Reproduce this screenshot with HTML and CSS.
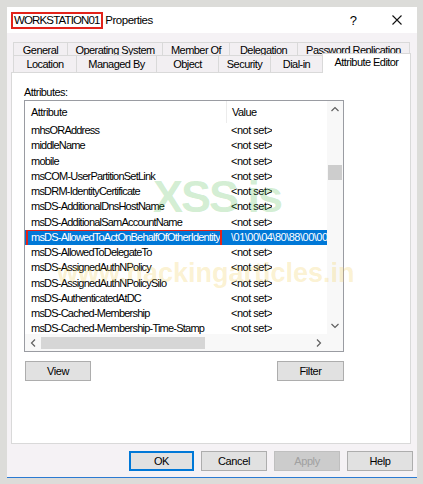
FILE: index.html
```html
<!DOCTYPE html>
<html>
<head>
<meta charset="utf-8">
<link rel="stylesheet" href="styles.css">
</head>
<body>
<div class="window">
  <div class="titlebar">
    <div class="title"><span class="hl-name">WORKSTATION01</span> Properties</div>
    <div class="help">?</div>
    <div class="close">
      <svg width="10" height="10" viewBox="0 0 10 10"><path d="M0.5 0.5 L9.5 9.5 M9.5 0.5 L0.5 9.5" stroke="#111" stroke-width="1.1" fill="none"/></svg>
    </div>
  </div>
  <div class="tabs">
    <div class="tabrow row1">
      <div class="tab w54">General</div>
      <div class="tab w95">Operating System</div>
      <div class="tab w67">Member Of</div>
      <div class="tab w68">Delegation</div>
      <div class="tab w113 last">Password Replication</div>
    </div>
    <div class="tabrow row2">
      <div class="tab w63">Location</div>
      <div class="tab w80">Managed By</div>
      <div class="tab w62">Object</div>
      <div class="tab w52">Security</div>
      <div class="tab w52">Dial-in</div>
      <div class="tab active">Attribute Editor</div>
    </div>
  </div>
  <div class="panel">
    <div class="label">Attributes:</div>
    <div class="list">
      <div class="content">
        <div class="header">
          <div class="hcell c1">Attribute</div>
          <div class="hcell c2">Value</div>
        </div>
        <div class="row"><div class="c1">mhsORAddress</div><div class="c2">&lt;not set&gt;</div></div>
        <div class="row"><div class="c1">middleName</div><div class="c2">&lt;not set&gt;</div></div>
        <div class="row"><div class="c1">mobile</div><div class="c2">&lt;not set&gt;</div></div>
        <div class="row"><div class="c1">msCOM-UserPartitionSetLink</div><div class="c2">&lt;not set&gt;</div></div>
        <div class="row"><div class="c1">msDRM-IdentityCertificate</div><div class="c2">&lt;not set&gt;</div></div>
        <div class="row"><div class="c1">msDS-AdditionalDnsHostName</div><div class="c2">&lt;not set&gt;</div></div>
        <div class="row"><div class="c1">msDS-AdditionalSamAccountName</div><div class="c2">&lt;not set&gt;</div></div>
        <div class="row selected"><div class="c1">msDS-AllowedToActOnBehalfOfOtherIdentity<span class="redbox"></span></div><div class="c2">\01\00\04\80\88\00\00\00\9C\00\00\00</div></div>
        <div class="row"><div class="c1">msDS-AllowedToDelegateTo</div><div class="c2">&lt;not set&gt;</div></div>
        <div class="row"><div class="c1">msDS-AssignedAuthNPolicy</div><div class="c2">&lt;not set&gt;</div></div>
        <div class="row"><div class="c1">msDS-AssignedAuthNPolicySilo</div><div class="c2">&lt;not set&gt;</div></div>
        <div class="row"><div class="c1">msDS-AuthenticatedAtDC</div><div class="c2">&lt;not set&gt;</div></div>
        <div class="row"><div class="c1">msDS-Cached-Membership</div><div class="c2">&lt;not set&gt;</div></div>
        <div class="row"><div class="c1">msDS-Cached-Membership-Time-Stamp</div><div class="c2">&lt;not set&gt;</div></div>
      </div>
      <div class="vscroll">
        <svg class="arrow" width="16" height="17" viewBox="0 0 16 17"><path d="M4.5 10 L8 6.5 L11.5 10" stroke="#606060" stroke-width="1.2" fill="none"/></svg>
        <div class="vtrack"><div class="vthumb"></div></div>
        <svg class="arrow" width="16" height="17" viewBox="0 0 16 17"><path d="M4.5 7 L8 10.5 L11.5 7" stroke="#606060" stroke-width="1.2" fill="none"/></svg>
      </div>
      <div class="hscroll">
        <svg class="arrow" width="16" height="16" viewBox="0 0 16 16"><path d="M10 4.5 L6.5 8 L10 11.5" stroke="#606060" stroke-width="1.2" fill="none"/></svg>
        <div class="htrack"><div class="hthumb"></div></div>
        <svg class="arrow" width="16" height="16" viewBox="0 0 16 16"><path d="M6 4.5 L9.5 8 L6 11.5" stroke="#606060" stroke-width="1.2" fill="none"/></svg>
      </div>
      <div class="corner"></div>
    </div>
    <div class="listbuttons">
      <button class="btn w66">View</button>
      <button class="btn w67">Filter</button>
    </div>
  </div>
  <div class="footer">
    <button class="btn fbtn default">OK</button>
    <button class="btn fbtn">Cancel</button>
    <button class="btn fbtn disabled">Apply</button>
    <button class="btn fbtn">Help</button>
  </div>
  <div class="wm wm1">XSS is</div>
  <div class="wm wm2">www.hackingarticles.in</div>
</div>
</body>
</html>
```

FILE: styles.css
```css
* { box-sizing: border-box; }
html, body { margin: 0; padding: 0; }
body {
  background: #dcdcd9;
  font-family: "Liberation Sans", Arial, sans-serif;
  font-size: 11px;
  letter-spacing: -0.55px;
  color: #000;
  width: 423px;
  height: 484px;
  overflow: hidden;
}
.window {
  margin: 7px 0 0 7px;
  width: 410px;
  height: 471px;
  background: #f5f2f5;
  border-bottom: 1px solid #2b7ad2;
  position: relative;
}
.titlebar {
  height: 26px;
  background: #fff;
  display: flex;
  align-items: center;
}
.title {
  margin-left: 4px;
  font-size: 11.5px;
  letter-spacing: -0.5px;
  white-space: nowrap;
  flex: 1;
}
.hl-name {
  display: inline-block;
  border: 2px solid #e2231a;
  padding: 0 1px 0 1px;
  line-height: 13px;
  letter-spacing: -0.85px;
}
.help {
  width: 14px;
  text-align: center;
  margin-right: 32px;
  font-size: 13px;
}
.close {
  width: 10px;
  height: 10px;
  margin-right: 15px;
  display: flex;
}
.tabs {
  padding: 9px 0 0 6px;
  height: 39px;
}
.tabrow { display: flex; }
.row1 { height: 14px; }
.row2 { height: 17px; margin-top: -1px; position: relative; z-index: 2; }
.tab {
  border: 1px solid #d9d9d9;
  border-right: none;
  border-bottom: none;
  text-align: center;
  white-space: nowrap;
  background: #f2eff2;
  line-height: 14px;
}
.row2 .tab { line-height: 17px; }
.tab.last { border-right: 1px solid #d9d9d9; }
.w54 { width: 54px; }
.w95 { width: 95px; }
.w67 { width: 67px; }
.w68 { width: 68px; }
.w113 { width: 113px; }
.w63 { width: 63px; }
.w80 { width: 80px; }
.w62 { width: 62px; }
.w52 { width: 52px; }
.w66 { width: 66px; }
.row2 .tab.active {
  width: 89px;
  height: 20px;
  margin-top: -2px;
  background: #fff;
  border-right: 1px solid #d9d9d9;
  line-height: 16px;
}
.panel {
  margin-left: 4px;
  width: 400px;
  height: 372px;
  background: #fff;
  border: 1px solid #d9d9d9;
  padding-left: 12px;
}
.label {
  margin-top: 12px;
  line-height: 14px;
}
.list {
  margin-top: 1px;
  width: 320px;
  height: 252px;
  border: 1px solid #9a9ca2;
  display: grid;
  grid-template-columns: 302px 16px;
  grid-template-rows: 233px 17px;
}
.content {
  overflow: hidden;
  background: #fff;
}
.header {
  display: flex;
  height: 22px;
  align-items: center;
}
.hcell { line-height: 22px; }
.header .c2 { border-left: 1px solid #ececec; }
.row {
  display: flex;
  height: 15.25px;
  line-height: 15px;
  white-space: nowrap;
  letter-spacing: -0.78px;
}
.c1 {
  width: 201px;
  flex: none;
  padding-left: 6px;
  overflow: hidden;
  position: relative;
}
.c2 {
  flex: none;
  padding-left: 5px;
  overflow: hidden;
}
.row .c2 { letter-spacing: -0.5px; }
.row.selected {
  background: #0078d7;
  color: #fff;
}
.redbox {
  position: absolute;
  left: 1px;
  top: -1px;
  width: 196px;
  height: 18px;
  border: 2px solid #e2231a;
}
.wm {
  position: absolute;
  font-family: "Liberation Sans", Arial, sans-serif;
  font-weight: bold;
  white-space: nowrap;
  pointer-events: none;
  line-height: 1;
  z-index: 5;
}
.wm1 {
  left: 146px;
  top: 167px;
  font-size: 45px;
  letter-spacing: -2px;
  color: rgba(60, 180, 60, 0.24);
}
.wm2 {
  left: 50px;
  top: 253px;
  font-size: 27px;
  letter-spacing: 0;
  color: rgba(240, 200, 60, 0.24);
}
.vscroll {
  background: #f8f8f8;
  display: flex;
  flex-direction: column;
}
.arrow { display: block; flex: none; }
.vtrack { flex: 1; position: relative; }
.vthumb {
  position: absolute;
  left: 1px;
  right: 1px;
  top: 47px;
  height: 15px;
  background: #cdcdcd;
}
.hscroll {
  background: #f8f8f8;
  display: flex;
  align-items: center;
}
.htrack { flex: 1; height: 14px; position: relative; }
.hthumb {
  position: absolute;
  left: 0;
  width: 164px;
  top: 1px;
  bottom: 1px;
  background: #d6d6d6;
}
.corner { background: #f8f8f8; }
.listbuttons {
  margin-top: 9px;
  margin-left: 1px;
  width: 319px;
  display: flex;
  justify-content: space-between;
}
.btn {
  font-family: "Liberation Sans", Arial, sans-serif;
  font-size: 11px;
  letter-spacing: -0.4px;
  height: 20px;
  background: #e1e1e1;
  border: 1px solid #adadad;
  padding: 0;
  color: #000;
  line-height: 18px;
}
.footer {
  display: flex;
  justify-content: flex-end;
  gap: 7px;
  padding-right: 4px;
  margin-top: 7px;
}
.fbtn { width: 66px; }
.fbtn.default {
  width: 65px;
  border: 2px solid #0078d7;
  line-height: 16px;
}
.fbtn.disabled {
  background: #cccccc;
  border-color: #bfbfbf;
  color: #a0a0a0;
}
```
